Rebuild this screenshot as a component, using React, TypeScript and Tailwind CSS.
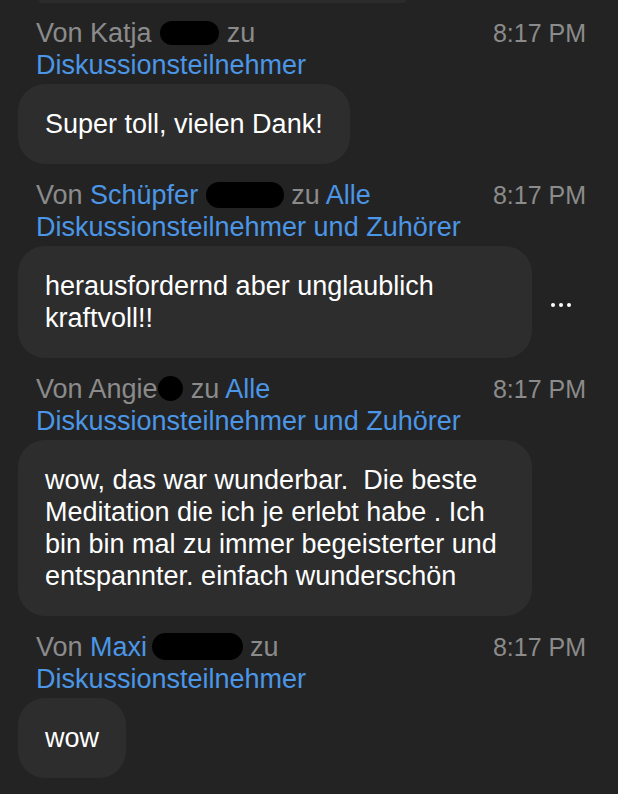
import React from "react";

type Part = { text: string; blue?: boolean };

interface Message {
  id: number;
  from: Part;
  blob: string;
  line1Tail: Part[];
  line2: string;
  body: string[];
  wide?: boolean;
  menu?: boolean;
}

const messages: Message[] = [
  {
    id: 1,
    from: { text: "Katja" },
    blob: "w-[59px] h-[24px] ml-[1px]",
    line1Tail: [{ text: "zu" }],
    line2: "Diskussionsteilnehmer",
    body: ["Super toll, vielen Dank!"],
  },
  {
    id: 2,
    from: { text: "Schüpfer", blue: true },
    blob: "w-[78px] h-[26px]",
    line1Tail: [{ text: "zu" }, { text: "Alle", blue: true }],
    line2: "Diskussionsteilnehmer und Zuhörer",
    body: ["herausfordernd aber unglaublich", "kraftvoll!!"],
    wide: true,
    menu: true,
  },
  {
    id: 3,
    from: { text: "Angie" },
    blob: "w-[25px] h-[25px] -ml-[7px]",
    line1Tail: [{ text: "zu" }, { text: "Alle", blue: true }],
    line2: "Diskussionsteilnehmer und Zuhörer",
    body: [
      "wow, das war wunderbar.\u00a0 Die beste",
      "Meditation die ich je erlebt habe . Ich",
      "bin bin mal zu immer begeisterter und",
      "entspannter. einfach wunderschön",
    ],
    wide: true,
  },
  {
    id: 4,
    from: { text: "Maxi", blue: true },
    blob: "w-[91px] h-[27px] -ml-[3px]",
    line1Tail: [{ text: "zu" }],
    line2: "Diskussionsteilnehmer",
    body: ["wow"],
  },
];

function ChatMessage({ msg }: { msg: Message }) {
  return (
    <div className="flex flex-col gap-[3px]">
      <div className="flex items-start justify-between pl-[36px] pr-[32px]">
        <div>
          <div className="whitespace-nowrap">
            <span className="text-[#8b8b8b]">Von </span>
            <span className={msg.from.blue ? "text-[#4b96e6]" : "text-[#8b8b8b]"}>
              {msg.from.text}
            </span>{" "}
            {/* redacted surname */}
            <span className={"inline-block rounded-full bg-black align-middle -mt-[4px] " + msg.blob} />
            {msg.line1Tail.map((p, i) => (
              <span key={i} className={p.blue ? "text-[#4b96e6]" : "text-[#8b8b8b]"}>
                {" "}
                {p.text}
              </span>
            ))}
          </div>
          <div className="text-[#4b96e6] whitespace-nowrap">{msg.line2}</div>
        </div>
        <div className="text-[#8b8b8b] text-[25px] shrink-0">8:17 PM</div>
      </div>
      <div className="flex items-center">
        <div
          className={
            "ml-[18px] bg-[#2d2d2d] rounded-[27px] px-[27px] py-[24px] text-white " +
            (msg.wide ? "w-[514px]" : "w-fit")
          }
        >
          {msg.body.map((line, i) => (
            <div key={i} className="whitespace-nowrap">
              {line}
            </div>
          ))}
        </div>
        {msg.menu && (
          <div className="ml-[19px] flex gap-[4px] mt-[6px]">
            <span className="w-[4px] h-[4px] rounded-full bg-white" />
            <span className="w-[4px] h-[4px] rounded-full bg-white" />
            <span className="w-[4px] h-[4px] rounded-full bg-white" />
          </div>
        )}
      </div>
    </div>
  );
}

export default function App() {
  return (
    <div className="w-[618px] h-[794px] overflow-hidden bg-[#232323] font-['Liberation_Sans',Arial,sans-serif] text-[27px] leading-[32px]">
      <div className="ml-[39px] w-[367px] h-[3px] rounded-b-[3px] bg-[#2b2b2b]" />
      <div className="flex flex-col gap-[15px] pt-[14px]">
        {messages.map((m) => (
          <ChatMessage key={m.id} msg={m} />
        ))}
      </div>
    </div>
  );
}
